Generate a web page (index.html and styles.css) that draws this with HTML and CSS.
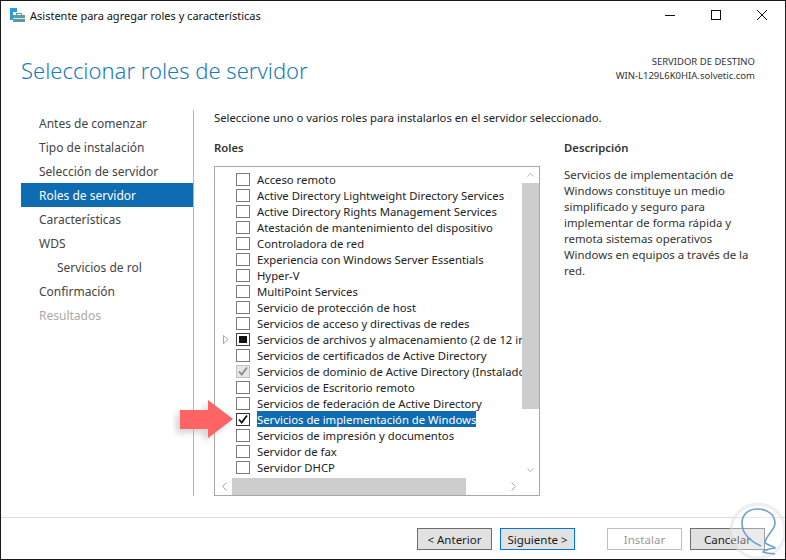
FILE: index.html
```html
<!DOCTYPE html>
<html lang="es">
<head>
<meta charset="utf-8">
<title>Asistente para agregar roles y características</title>
<link rel="stylesheet" href="styles.css">
</head>
<body>
<div class="window">
  <div class="titlebar">
    <svg class="app-icon" width="15" height="14" viewBox="0 0 15 14"><rect x="0" y="0" width="7" height="4" fill="#2b9be0"/><rect x="0" y="4" width="3" height="8" fill="#2b9be0"/><rect x="3" y="7" width="12" height="7" fill="#5f9aa3"/><rect x="6.5" y="5.5" width="5" height="2" fill="none" stroke="#5f9aa3"/><rect x="3" y="10" width="12" height="1" fill="#d5e6ea"/></svg>
    <span class="title-text">Asistente para agregar roles y características</span>
    <div class="win-controls">
      <svg width="10" height="10" viewBox="0 0 10 10"><path d="M0 5.5H10" stroke="#111" fill="none"/></svg>
      <svg width="10" height="10" viewBox="0 0 10 10"><rect x=".5" y=".5" width="9" height="9" stroke="#111" fill="none"/></svg>
      <svg width="10" height="10" viewBox="0 0 10 10"><path d="M0 0L10 10M10 0L0 10" stroke="#111" fill="none"/></svg>
    </div>
  </div>
  <div class="header">
    <h1 class="page-title">Seleccionar roles de servidor</h1>
    <div class="target">
      <div>SERVIDOR DE DESTINO</div>
      <div>WIN-L129L6K0HIA.solvetic.com</div>
    </div>
  </div>
  <div class="main">
    <nav class="nav">
      <div class="nav-item">Antes de comenzar</div>
      <div class="nav-item">Tipo de instalación</div>
      <div class="nav-item">Selección de servidor</div>
      <div class="nav-item active">Roles de servidor</div>
      <div class="nav-item">Características</div>
      <div class="nav-item">WDS</div>
      <div class="nav-item sub">Servicios de rol</div>
      <div class="nav-item">Confirmación</div>
      <div class="nav-item disabled">Resultados</div>
    </nav>
    <div class="content">
      <p class="intro">Seleccione uno o varios roles para instalarlos en el servidor seleccionado.</p>
      <div class="columns">
        <section class="roles">
          <h2 class="col-head">Roles</h2>
          <div class="listbox">
            <div class="list-top">
              <div class="rows">
                <div class="row"><span class="cb"></span><span class="lbl">Acceso remoto</span></div>
                <div class="row"><span class="cb"></span><span class="lbl">Active Directory Lightweight Directory Services</span></div>
                <div class="row"><span class="cb"></span><span class="lbl">Active Directory Rights Management Services</span></div>
                <div class="row"><span class="cb"></span><span class="lbl">Atestación de mantenimiento del dispositivo</span></div>
                <div class="row"><span class="cb"></span><span class="lbl">Controladora de red</span></div>
                <div class="row"><span class="cb"></span><span class="lbl">Experiencia con Windows Server Essentials</span></div>
                <div class="row"><span class="cb"></span><span class="lbl">Hyper-V</span></div>
                <div class="row"><span class="cb"></span><span class="lbl">MultiPoint Services</span></div>
                <div class="row"><span class="cb"></span><span class="lbl">Servicio de protección de host</span></div>
                <div class="row"><span class="cb"></span><span class="lbl">Servicios de acceso y directivas de redes</span></div>
                <div class="row"><svg class="expander" width="6" height="9" viewBox="0 0 6 9"><path d="M.5.5L5 4.5L.5 8.5Z" fill="#fff" stroke="#a6a6a6"/></svg><span class="cb partial"><i></i></span><span class="lbl">Servicios de archivos y almacenamiento (2 de 12 instalados)</span></div>
                <div class="row"><span class="cb"></span><span class="lbl">Servicios de certificados de Active Directory</span></div>
                <div class="row"><span class="cb off"><svg width="12" height="11" viewBox="0 0 12 11"><path d="M2 5.5L4.7 8.5L10 1.5" stroke="#8a8a8a" stroke-width="1.8" fill="none"/></svg></span><span class="lbl">Servicios de dominio de Active Directory (Instalado)</span></div>
                <div class="row"><span class="cb"></span><span class="lbl">Servicios de Escritorio remoto</span></div>
                <div class="row"><span class="cb"></span><span class="lbl">Servicios de federación de Active Directory</span></div>
                <div class="row"><span class="cb dark"><svg width="12" height="11" viewBox="0 0 12 11"><path d="M2 5.5L4.7 8.5L10 1.5" stroke="#111" stroke-width="1.8" fill="none"/></svg></span><span class="lbl selected">Servicios de implementación de Windows</span></div>
                <div class="row"><span class="cb"></span><span class="lbl">Servicios de impresión y documentos</span></div>
                <div class="row"><span class="cb"></span><span class="lbl">Servidor de fax</span></div>
                <div class="row"><span class="cb"></span><span class="lbl">Servidor DHCP</span></div>
              </div>
              <div class="vscroll">
                <svg class="sb-arrow" width="9" height="5" viewBox="0 0 9 5"><path d="M.5 4.5L4.5.5L8.5 4.5" stroke="#a6a6a6" fill="none"/></svg>
                <div class="v-track"><div class="v-thumb"></div></div>
                <svg class="sb-arrow" width="9" height="5" viewBox="0 0 9 5"><path d="M.5.5L4.5 4.5L8.5.5" stroke="#a6a6a6" fill="none"/></svg>
              </div>
            </div>
            <div class="hscroll">
              <svg width="5" height="9" viewBox="0 0 5 9"><path d="M4.5.5L.5 4.5L4.5 8.5" stroke="#a6a6a6" fill="none"/></svg>
              <div class="h-track"><div class="h-thumb"></div></div>
              <svg width="5" height="9" viewBox="0 0 5 9"><path d="M.5.5L4.5 4.5L.5 8.5" stroke="#a6a6a6" fill="none"/></svg>
            </div>
          </div>
        </section>
        <section class="desc">
          <h2 class="col-head">Descripción</h2>
          <p class="desc-text">Servicios de implementación de Windows constituye un medio simplificado y seguro para implementar de forma rápida y remota sistemas operativos Windows en equipos a través de la red.</p>
        </section>
      </div>
    </div>
  </div>
  <div class="footer">
    <button class="btn">&lt; Anterior</button>
    <button class="btn focus">Siguiente &gt;</button>
    <button class="btn dis">Instalar</button>
    <button class="btn">Cancelar</button>
  </div>
  <svg class="arrow" width="70" height="56" viewBox="0 0 70 56"><defs><filter id="sh" x="-20%" y="-20%" width="140%" height="140%"><feGaussianBlur stdDeviation="3"/></filter></defs><path d="M4 16H32V6L57 25L32 44V35H4Z" fill="#aaa" opacity=".5" transform="translate(-1 3)" filter="url(#sh)"/><path d="M7 15H35V5L60 24L35 43V34H7Z" fill="#fe6464"/></svg>
  <svg class="mark" width="66" height="66" viewBox="0 0 66 66"><circle cx="38" cy="36" r="27" fill="#fff" fill-opacity=".35" stroke="#ddd" stroke-opacity=".5" stroke-width="3"/><path d="M41 51C30 46 22 38 22 28C22 19 29 14 37 14C48 14 55 20 55 28C55 35 47 39 45 47C45 50 54 51 55 53C48 54 43 56 43 57C48 59 52 58 55 59" fill="none" stroke="#6d9fcf" stroke-width="1.6"/></svg>
</div>
</body>
</html>
```
FILE: styles.css
```css
* { box-sizing: border-box; }
html, body { margin: 0; padding: 0; }
body { width: 786px; height: 560px; background: #fff; font-family: "Noto Sans", "Open Sans", sans-serif; font-size: 11.3px; color: #1a1a1a; overflow: hidden; }
.window { position: relative; width: 786px; height: 560px; border: 1px solid #1a1a1a; background: #fff; display: flex; flex-direction: column; overflow: hidden; }
.titlebar { height: 28px; display: flex; align-items: center; padding-left: 9px; flex: none; }
.app-icon { flex: none; }
.title-text { margin-left: 5px; font-size: 11px; color: #111; }
.win-controls { margin-left: auto; display: flex; gap: 36px; padding-right: 18px; }
.header { height: 81px; display: flex; justify-content: space-between; flex: none; padding: 0 30px 0 20px; }
.page-title { margin: 26px 0 0; font-size: 22px; font-weight: 300; color: #1b7bbd; line-height: 30px; }
.target { margin-top: 26px; font-size: 9.5px; line-height: 14px; text-align: right; color: #333; }
.main { height: 386px; display: flex; flex: none; }
.nav { width: 193px; flex: none; border-right: 1px solid #b4b4b4; padding: 1px 0 0 20px; font-size: 12px; }
.nav-item { height: 24px; line-height: 26px; padding-left: 18px; color: #444; }
.nav-item.active { background: #0f6bb2; color: #fff; }
.nav-item.sub { padding-left: 36px; }
.nav-item.disabled { color: #aaa; }
.content { flex: 1; padding-left: 20px; min-width: 0; }
.intro { margin: 0; height: 30px; line-height: 16px; color: #222; }
.columns { display: flex; }
.roles { width: 326px; flex: none; }
.col-head { margin: 0; height: 26px; line-height: 16px; font-size: 11.3px; font-weight: 600; color: #333; }
.listbox { height: 330px; border: 1px solid #a8a8a8; display: flex; flex-direction: column; }
.list-top { flex: 1; min-height: 0; display: flex; }
.rows { flex: 1; min-width: 0; padding-top: 4px; height: 307px; overflow: hidden; }
.row { position: relative; height: 16px; display: flex; align-items: center; padding-left: 21px; overflow: hidden; white-space: nowrap; }
.expander { position: absolute; left: 8px; top: 4px; }
.cb { width: 14px; height: 13px; flex: none; border: 1px solid #7a7a7a; display: flex; align-items: center; justify-content: center; background: #fff; }
.cb.off { background: #e6e6e6; border-color: #c4c4c4; }
.cb.dark { border-color: #333; }
.cb.partial { border-color: #444; }
.cb.partial i { width: 8px; height: 7px; background: #111; }
.lbl { margin-left: 7px; height: 16px; line-height: 18px; color: #222; }
.lbl.selected { background: #0f6bb2; color: #fff; }
.vscroll { width: 17px; flex: none; display: flex; flex-direction: column; align-items: center; padding: 6px 0; }
.v-track { flex: 1; width: 100%; margin: 6px 0 59px; }
.v-thumb { width: 100%; height: 226px; background: #cdcdcd; }
.hscroll { height: 17px; flex: none; display: flex; align-items: center; padding: 0 23px 0 7px; }
.h-track { flex: 1; height: 100%; margin: 0 6px 0 5px; }
.h-thumb { width: 234px; height: 100%; background: #cdcdcd; }
.desc { padding-left: 24px; flex: 1; min-width: 0; padding-right: 23px; }
.desc-text { margin: 0; font-size: 11.4px; line-height: 16px; padding-top: 1px; color: #333; }
.footer { flex: 1; margin-top: 21px; border-top: 1px solid #dcdcdc; display: flex; align-items: flex-start; padding: 10px 0 0 416px; gap: 8px; font-size: 11.5px; }
.btn { width: 75px; height: 22px; padding: 0; background: #e1e1e1; border: 1px solid #6e6e6e; font: inherit; color: #1a1a1a; }
.btn.focus { margin-right: 24px; border-color: #0078d7; }
.btn.dis { background: #fff; border-color: #bfbfbf; color: #9a9a9a; }
.arrow { position: absolute; left: 172px; top: 394px; }
.mark { position: absolute; left: 719px; top: 494px; }
```
